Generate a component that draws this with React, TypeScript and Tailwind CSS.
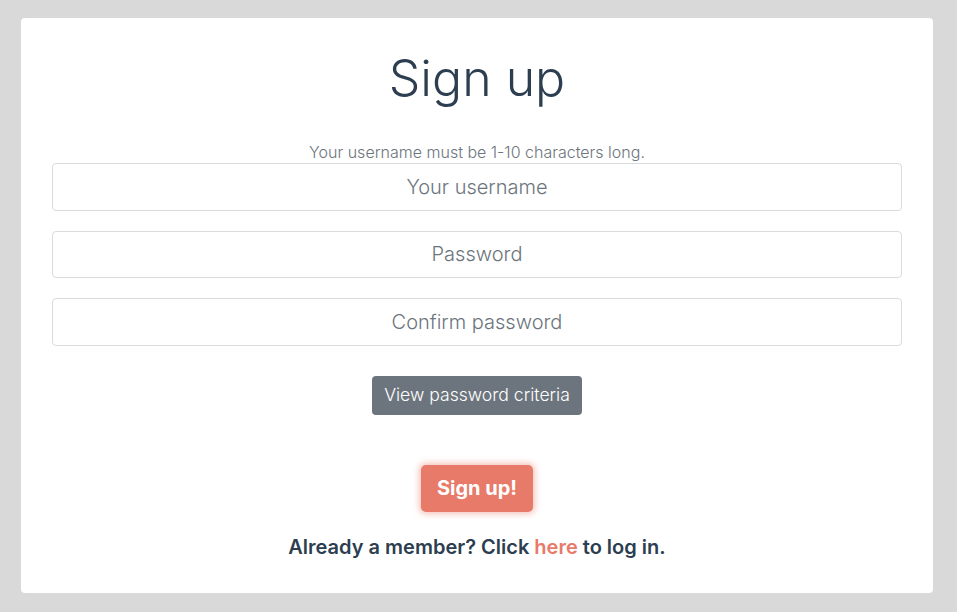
import React from "react";

const fields = [
  { placeholder: "Your username", type: "text" },
  { placeholder: "Password", type: "password" },
  { placeholder: "Confirm password", type: "password" },
];

export default function App() {
  return (
    <div className="min-h-screen bg-[#d8d9d8] pt-[18px] pb-[19px] pl-[21px] pr-[24px] font-['Inter',sans-serif]">
      <div className="bg-white rounded-[4px] px-[31px] pt-[30px] pb-[33px] flex flex-col items-center">
        {/* Heading */}
        <h1 className="text-[50px] leading-[60px] font-light text-[#2c3e50]">Sign up</h1>

        {/* Form */}
        <form className="w-full mt-[33px] flex flex-col items-center" onSubmit={(e) => e.preventDefault()}>
          <p className="text-[16px] leading-[22px] font-light text-[#6c757d]">
            Your username must be 1-10 characters long.
          </p>
          {fields.map((f, i) => (
            <input
              key={i}
              type={f.type}
              placeholder={f.placeholder}
              className={`w-full h-[47.5px] border border-[#d9dcdf] rounded-[4px] text-center text-[20px] font-light text-[#495057] placeholder:text-[#6c757d] outline-none ${i === 0 ? "mt-0" : "mt-[20px]"}`}
            />
          ))}

          <button
            type="button"
            className="mt-[30px] h-[39px] px-[12px] rounded-[4px] bg-[#6c757d] text-white text-[17.6px] font-light"
          >
            View password criteria
          </button>

          <button
            type="submit"
            className="mt-[50px] h-[47px] px-[16px] rounded-[5px] bg-[#e77a69] text-white text-[20px] font-bold shadow-[0_0_6px_2px_rgba(231,122,105,0.45)]"
          >
            Sign up!
          </button>
        </form>

        <p className="mt-[22px] text-[20px] leading-[26px] font-semibold text-[#2c3e50]">
          Already a member? Click <a href="#" className="text-[#e77a69]">here</a> to log in.
        </p>
      </div>
    </div>
  );
}
